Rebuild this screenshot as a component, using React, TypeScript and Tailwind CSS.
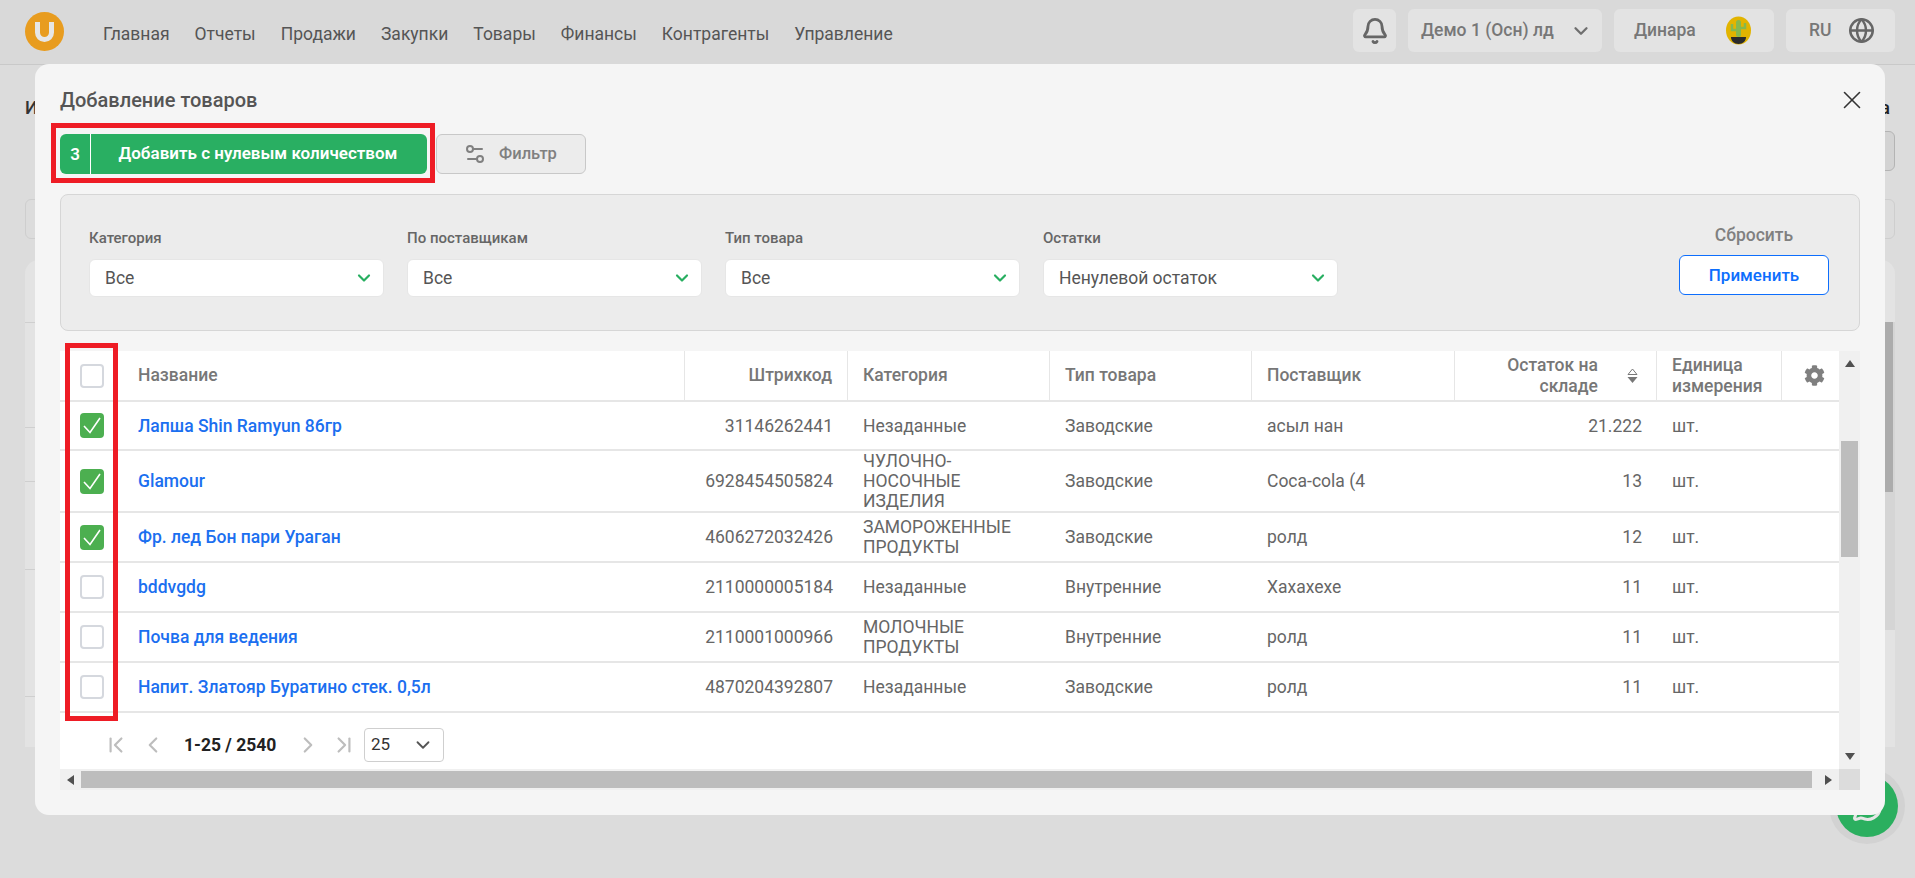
import React from 'react';
import { Bell, ChevronDown, ChevronFirst, ChevronLast, ChevronLeft, ChevronRight, Globe, MessageCircle, Settings2, X } from 'lucide-react';
import { FaCog } from 'react-icons/fa';

const navItems = ['Главная', 'Отчеты', 'Продажи', 'Закупки', 'Товары', 'Финансы', 'Контрагенты', 'Управление'];

const filters = [
  { label: 'Категория', value: 'Все' },
  { label: 'По поставщикам', value: 'Все' },
  { label: 'Тип товара', value: 'Все' },
  { label: 'Остатки', value: 'Ненулевой остаток' },
];

const rows = [
  { name: 'Лапша Shin Ramyun 86гр', code: '31146262441', cat: 'Незаданные', type: 'Заводские', sup: 'асыл нан', qty: '21.222', on: true, h: 'h-[49px]' },
  { name: 'Glamour', code: '6928454505824', cat: 'ЧУЛОЧНО-НОСОЧНЫЕ ИЗДЕЛИЯ', type: 'Заводские', sup: 'Coca-cola (4', qty: '13', on: true, h: 'h-[61px]' },
  { name: 'Фр. лед Бон пари Ураган', code: '4606272032426', cat: 'ЗАМОРОЖЕННЫЕ ПРОДУКТЫ', type: 'Заводские', sup: 'ролд', qty: '12', on: true, h: 'h-[50px]' },
  { name: 'bddvgdg', code: '2110000005184', cat: 'Незаданные', type: 'Внутренние', sup: 'Хахахехе', qty: '11', on: false, h: 'h-[50px]' },
  { name: 'Почва для ведения', code: '2110001000966', cat: 'МОЛОЧНЫЕ ПРОДУКТЫ', type: 'Внутренние', sup: 'ролд', qty: '11', on: false, h: 'h-[50px]' },
  { name: 'Напит. Златояр Буратино стек. 0,5л', code: '4870204392807', cat: 'Незаданные', type: 'Заводские', sup: 'ролд', qty: '11', on: false, h: 'h-[50px]' },
];

function Checkbox({ on }: { on: boolean }) {
  if (!on) return <div className="ml-[20px] w-[24px] h-[24px] rounded-[4px] border-2 border-[#d5d8de] bg-white" />;
  return (
    <div className="ml-[20px] w-[24px] h-[25px] rounded-[4px] bg-[#4caf50]">
      <svg width="24" height="25" viewBox="0 0 24 25" fill="none">
        <path d="M4 13l6 6.500L20 5" stroke="white" strokeWidth="1.600" />
      </svg>
    </div>
  );
}

function Arrow({ dir, color = '#505050' }: { dir: 'up' | 'down' | 'left' | 'right'; color?: string }) {
  const d = { up: 'M0 7L5 0l5 7z', down: 'M0 0h10L5 7z', left: 'M7 0v10L0 5z', right: 'M0 0v10l7-5z' }[dir];
  const vertical = dir === 'up' || dir === 'down';
  return (
    <svg width={vertical ? 10 : 7} height={vertical ? 7 : 10} viewBox={vertical ? '0 0 10 7' : '0 0 7 10'} className="shrink-0">
      <path d={d} fill={color} />
    </svg>
  );
}

function Header() {
  return (
    <header className="h-[65px] flex items-center bg-[#d9d9d9] border-b border-[#c9c9c9] pl-[25px] pr-[20px]">
      <svg width="39" height="39" viewBox="0 0 39 39" className="shrink-0 mb-[1px]">
        <circle cx="19.500" cy="19.500" r="19.500" fill="#e89c1f" />
        <path d="M12.500 10v10.500a7 7 0 0 0 14 0V10" fill="none" stroke="#e6e6e6" strokeWidth="5" />
      </svg>
      <nav className="ml-[39px] flex gap-[25px] text-[17.500px] text-[#555] pt-[4px]">
        {navItems.map((item) => (
          <span key={item}>{item}</span>
        ))}
      </nav>
      <div className="ml-auto flex items-center gap-[12px] mb-[3px] text-[17.500px] font-medium text-[#777]">
        <div className="w-[43px] h-[43px] flex items-center justify-center rounded-[6px] bg-[#e3e3e3]">
          <Bell size={28} strokeWidth={2.400} className="text-[#666]" />
        </div>
        <div className="w-[194px] h-[43px] flex items-center justify-between pl-[13px] pr-[10px] rounded-[6px] bg-[#e3e3e3]">
          <span>Демо 1 (Осн) лд</span>
          <ChevronDown size={22} strokeWidth={2.500} className="text-[#6f6f6f]" />
        </div>
        <div className="w-[160px] h-[43px] flex items-center justify-between pl-[20px] pr-[23px] rounded-[6px] bg-[#e3e3e3]">
          <span>Динара</span>
          <svg width="25" height="29" viewBox="0 0 25 29">
            <ellipse cx="12.500" cy="14.500" rx="12.500" ry="14" fill="#e2b400" />
            <rect x="10" y="4" width="5" height="17" rx="2.500" fill="#86b84d" />
            <path d="M6 8v6h4M19 7v5h-4" fill="none" stroke="#86b84d" strokeWidth="2.500" />
            <path d="M5 21h15c0 4-3 7-7.500 7S5 25 5 21z" fill="#2b2b2b" />
          </svg>
        </div>
        <div className="w-[109px] h-[43px] flex items-center justify-between pl-[23px] pr-[20px] rounded-[6px] bg-[#e3e3e3]">
          <span>RU</span>
          <Globe size={27} strokeWidth={2.200} className="text-[#666]" />
        </div>
      </div>
    </header>
  );
}

// page behind the dialog, only its edges stay visible
function Backdrop() {
  const lines = ['h-[63px]', 'h-[105px]', 'h-[54px]', 'h-[88px]', 'h-[127px]'];
  return (
    <main className="pl-[25px] pr-[20px]">
      <div className="h-[66px] flex items-end justify-between pb-[10px] text-[18px] font-medium text-[#333]">
        <span>И</span>
        <span className="pr-[5px] text-[#222]">а</span>
      </div>
      <div className="ml-auto w-[100px] h-[40px] rounded-[6px] border border-[#b4b4b4] bg-[#d3d3d3]" />
      <div className="mt-[28px] h-[40px] rounded-[6px] border border-[#cecece]" />
      <div className="mt-[21px] h-[487px] flex rounded-t-[14px] bg-[#e3e3e3]">
        <div className="flex-1">
          {lines.map((h) => (
            <div key={h} className={`${h} border-b border-[#cfcfcf]`} />
          ))}
        </div>
        <div className="w-[10px] pt-[62px]">
          <div className="h-[308px] bg-[#d5d5d5]">
            <div className="w-[8px] h-[170px] bg-[#acacac]" />
          </div>
        </div>
      </div>
    </main>
  );
}

function Toolbar() {
  return (
    <div className="mt-[22px] flex gap-[9px]">
      <div className="w-[367px] h-[40px] flex items-center rounded-[6px] bg-[#29af62] text-white font-semibold text-[17px]">
        <span className="w-[31px] text-center border-r border-white leading-[40px]">3</span>
        <span className="flex-1 text-center pr-[2px]">Добавить с нулевым количеством</span>
      </div>
      <div className="w-[150px] h-[40px] flex items-center justify-center gap-[12px] rounded-[6px] border border-[#c8c8c8] bg-[#ececec] text-[#808080] font-medium text-[16.500px] pr-[2px]">
        <Settings2 size={24} strokeWidth={2} />
        <span>Фильтр</span>
      </div>
    </div>
  );
}

function FilterPanel() {
  return (
    <div className="mt-[20px] h-[137px] flex items-start rounded-[8px] border border-[#d6d6d6] bg-[#ececec] pl-[28px] pr-[30px]">
      <div className="flex gap-[23px] pt-[33px]">
        {filters.map((f) => (
          <div key={f.label} className="w-[295px]">
            <div className="h-[20px] leading-[20px] text-[15px] font-medium text-[#666]">{f.label}</div>
            <div className="mt-[11px] h-[38px] flex items-center justify-between rounded-[6px] border border-[#e6e6e6] bg-white pl-[15px] pr-[9px] text-[17.500px] text-[#555]">
              <span>{f.value}</span>
              <ChevronDown size={20} strokeWidth={2.600} className="text-[#27ae60]" />
            </div>
          </div>
        ))}
      </div>
      <div className="ml-auto w-[150px] pt-[30px] text-center">
        <div className="h-[20px] leading-[20px] text-[17.500px] font-medium text-[#808080]">Сбросить</div>
        <div className="mt-[10px] h-[40px] leading-[38px] rounded-[6px] border border-[#0d6efd] bg-white text-[17px] font-medium text-[#0d6efd]">Применить</div>
      </div>
    </div>
  );
}

function ProductTable() {
  const th = 'border-b-2 border-r border-[#e6e6e6] px-[15px] font-medium text-[#777] leading-[21px]';
  const td = 'border-b-2 border-[#e6e6e6] px-[15px]';
  return (
    <table className="w-[1779px] table-fixed border-separate border-spacing-0 text-[17.500px] leading-[20px] text-[#666]">
      <thead>
        <tr className="h-[51px]">
          <th className="w-[58px] border-b-2 border-[#e6e6e6]">
            <Checkbox on={false} />
          </th>
          <th className={`w-[567px] pl-[20px] text-left ${th}`}>Название</th>
          <th className={`w-[163px] text-right ${th}`}>Штрихкод</th>
          <th className={`w-[202px] text-left ${th}`}>Категория</th>
          <th className={`w-[202px] text-left ${th}`}>Тип товара</th>
          <th className={`w-[203px] text-left ${th}`}>Поставщик</th>
          <th className={`w-[202px] ${th}`}>
            <div className="flex items-center justify-end gap-[29px] text-right">
              <span>
                Остаток на
                <br />
                складе
              </span>
              <svg width="11" height="16" viewBox="0 0 11 16" className="shrink-0 mr-[3px]">
                <path d="M1 6.500L5.500 1 10 6.500z" fill="none" stroke="#777" />
                <path d="M.5 9h10l-5 6z" fill="#777" />
              </svg>
            </div>
          </th>
          <th className={`w-[125px] text-left ${th}`}>
            Единица
            <br />
            измерения
          </th>
          <th className="w-[57px] border-b-2 border-[#e6e6e6] pl-[22px]">
            <FaCog size={21} className="text-[#7f7f7f]" />
          </th>
        </tr>
      </thead>
      <tbody>
        {rows.map((r) => (
          <tr key={r.code} className={r.h}>
            <td className="border-b-2 border-[#e6e6e6]">
              <Checkbox on={r.on} />
            </td>
            <td className={`${td} pl-[20px] font-medium text-[#1b6ff0]`}>{r.name}</td>
            <td className={`${td} text-right`}>{r.code}</td>
            <td className={`${td} pr-[30px]`}>{r.cat}</td>
            <td className={td}>{r.type}</td>
            <td className={td}>{r.sup}</td>
            <td className={`${td} text-right`}>{r.qty}</td>
            <td className={td}>шт.</td>
            <td className="border-b-2 border-[#e6e6e6]" />
          </tr>
        ))}
      </tbody>
    </table>
  );
}

function Pagination() {
  return (
    <div className="h-[57px] pt-[7px] flex items-center pl-[43px] text-[#bdbdbd]">
      <ChevronFirst size={26} strokeWidth={2} />
      <ChevronLeft size={26} strokeWidth={2} className="ml-[11px]" />
      <span className="ml-[18px] w-[93px] text-[17.500px] font-bold text-[#222] whitespace-nowrap">1-25 / 2540</span>
      <ChevronRight size={26} strokeWidth={2} className="ml-[18px]" />
      <ChevronLast size={26} strokeWidth={2} className="ml-[10px]" />
      <div className="ml-[7px] w-[80px] h-[34px] flex items-center justify-between rounded-[4px] border border-[#cfcfcf] pl-[6px] pr-[9px] text-[17px] text-[#333]">
        <span>25</span>
        <ChevronDown size={22} strokeWidth={2} className="text-[#555]" />
      </div>
    </div>
  );
}

function TableBlock() {
  return (
    <div className="mt-[20px]">
      <div className="flex h-[418px]">
        <div className="w-[1779px] bg-white">
          <ProductTable />
          <Pagination />
        </div>
        <div className="w-[21px] flex flex-col items-center bg-[#f0f0f0] pt-[9px]">
          <Arrow dir="up" />
          <div className="mt-[74px] w-[17px] h-[116px] bg-[#bdbdbd]" />
          <div className="mt-[196px]">
            <Arrow dir="down" />
          </div>
        </div>
      </div>
      <div className="flex h-[21px] items-center bg-[#f0f0f0]">
        <div className="w-[21px] flex justify-center">
          <Arrow dir="left" />
        </div>
        <div className="w-[1731px] h-[17px] bg-[#bdbdbd]" />
        <div className="w-[27px] flex justify-center pl-[6px]">
          <Arrow dir="right" />
        </div>
        <div className="w-[21px] h-full bg-[#dcdcdc]" />
      </div>
    </div>
  );
}

export default function App() {
  return (
    <div className="relative w-full h-[878px] overflow-hidden bg-[#dcdcdc] font-['Roboto',sans-serif]">
      <Header />
      <Backdrop />

      {/* chat button under the dialog corner */}
      <div className="absolute left-[1829px] top-[768px] w-[76px] h-[76px] flex items-center justify-center rounded-full bg-[#d2d2d2]">
        <div className="w-[62px] h-[62px] flex items-center justify-center rounded-full bg-[#2baf5f]">
          <MessageCircle size={31} strokeWidth={2.400} className="text-[#e6e6e6]" />
        </div>
      </div>

      {/* dialog */}
      <div className="absolute left-[35px] top-[64px] w-[1850px] h-[751px] rounded-[14px] bg-[#f5f5f5] px-[25px] pt-[24px]">
        <div className="flex h-[24px] items-center justify-between">
          <h2 className="text-[20px] font-medium text-[#555]">Добавление товаров</h2>
          <X size={30} strokeWidth={1.300} className="mr-[-7px] text-[#333]" />
        </div>
        <Toolbar />
        <FilterPanel />
        <TableBlock />
      </div>

      {/* red annotation frames */}
      <div className="absolute left-[51px] top-[123px] w-[384px] h-[60px] border-[5px] border-[#ee1c25]" />
      <div className="absolute left-[65px] top-[343px] w-[53px] h-[378px] border-[5px] border-[#ee1c25]" />
    </div>
  );
}
